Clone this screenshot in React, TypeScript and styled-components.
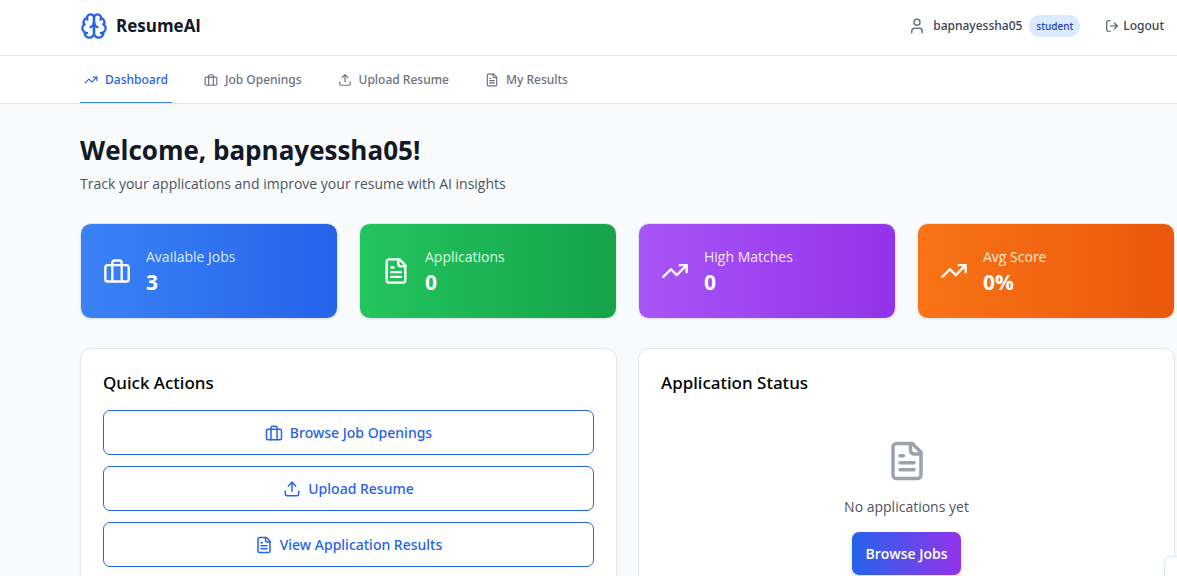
import React from "react";
import styled, { createGlobalStyle } from "styled-components";
import { LogOut, TrendingUp, Upload, User } from "lucide-react";

const mediumFont = `"Noto Sans", "Open Sans", sans-serif`;

const GlobalStyle = createGlobalStyle`
  *, *::before, *::after { box-sizing: border-box; }
  body {
    margin: 0;
    background: #f9fafb;
    color: #000;
    font-family: "Open Sans", "Noto Sans", sans-serif;
    font-size: 14px;
    line-height: 20px;
  }
  h1, h2, p { margin: 0; }
  button { font-family: inherit; cursor: pointer; }
  svg { flex: none; }
`;

const Page = styled.div`
  min-height: 100vh;
`;

const Container = styled.div`
  padding: 0 2px 0 80px;
`;

const Header = styled.header`
  background: #fff;
  border-bottom: 1px solid #e5e7eb;
`;

const HeaderRow = styled(Container)`
  display: flex;
  align-items: center;
  justify-content: space-between;
  height: 55px;
  padding-bottom: 4px;
`;

const Brand = styled.a`
  display: flex;
  align-items: center;
  gap: 8px;
  color: #111827;
  font-size: 17px;
  font-weight: 700;
  line-height: 28px;
  text-decoration: none;
  svg { color: #2563eb; }
`;

const Account = styled.div`
  display: flex;
  align-items: center;
  gap: 14px;
`;

const UserInfo = styled.div`
  display: flex;
  align-items: center;
  gap: 7px;
  color: #374151;
  font-family: ${mediumFont};
  font-size: 12px;
  font-weight: 500;
  svg { color: #6b7280; }
`;

const RoleBadge = styled.span`
  padding: 3px 7px;
  border-radius: 11px;
  background: #dbeafe;
  color: #1e40af;
  font-size: 10px;
  font-weight: 500;
  line-height: 16px;
`;

const LogoutButton = styled.button`
  display: flex;
  align-items: center;
  gap: 4px;
  padding: 5px 11px;
  border: 0;
  border-radius: 8px;
  background: transparent;
  color: #374151;
  font-family: ${mediumFont};
  font-size: 12px;
  font-weight: 500;
  line-height: 18px;
  svg { color: #4b5563; }
`;

const Nav = styled.nav`
  background: #fff;
  border-bottom: 1px solid #e5e7eb;
`;

const TabList = styled(Container)`
  display: flex;
  gap: 28px;
`;

const Tab = styled.a<{ $active?: boolean }>`
  display: flex;
  align-items: center;
  gap: 7px;
  height: 47px;
  padding: 1px 4px 0;
  border-bottom: 1px solid ${(p) => (p.$active ? "#3b82f6" : "transparent")};
  color: ${(p) => (p.$active ? "#2563eb" : "#6b7280")};
  font-family: ${mediumFont};
  font-size: 12px;
  font-weight: 500;
  text-decoration: none;
`;

const Main = styled.main`
  padding: 28px 2px 28px 80px;
`;

const Title = styled.h1`
  color: #111827;
  font-size: 26px;
  font-weight: 700;
  line-height: 36px;
`;

const Subtitle = styled.p`
  margin-top: 5px;
  color: #4b5563;
  font-size: 14px;
  line-height: 22px;
`;

const StatGrid = styled.section`
  display: grid;
  grid-template-columns: repeat(4, 1fr);
  gap: 21px;
  margin-top: 28px;
`;

const StatCard = styled.div<{ $from: string; $to: string }>`
  display: flex;
  align-items: center;
  gap: 15px;
  height: 96px;
  padding: 0 22px;
  border: 1px solid #e5e7eb;
  border-radius: 11px;
  background: linear-gradient(to right, ${(p) => p.$from}, ${(p) => p.$to});
  box-shadow: 0 1px 2px rgba(0, 0, 0, 0.06);
  color: #fff;
`;

const StatLabel = styled.p<{ $color: string }>`
  color: ${(p) => p.$color};
  font-size: 14px;
  line-height: 22px;
`;

const StatValue = styled.p`
  font-size: 21px;
  font-weight: 700;
  line-height: 28px;
`;

const PanelGrid = styled.div`
  display: grid;
  grid-template-columns: repeat(2, 1fr);
  gap: 21px;
  margin-top: 29px;
`;

const Panel = styled.section`
  padding: 22px;
  border: 1px solid #e5e7eb;
  border-radius: 11px;
  background: #fff;
  box-shadow: 0 1px 2px rgba(0, 0, 0, 0.05);
`;

const PanelTitle = styled.h2`
  font-family: ${mediumFont};
  font-size: 17px;
  font-weight: 500;
  line-height: 24px;
`;

const ActionList = styled.div`
  display: grid;
  gap: 11px;
  margin-top: 15px;
`;

const ActionButton = styled.button`
  display: flex;
  align-items: center;
  justify-content: center;
  gap: 7px;
  height: 45px;
  border: 1px solid #2563eb;
  border-radius: 7px;
  background: #fff;
  color: #2563eb;
  font-family: ${mediumFont};
  font-size: 14px;
  font-weight: 500;
`;

const EmptyState = styled.div`
  display: flex;
  flex-direction: column;
  align-items: center;
  padding-top: 45px;
  color: #4b5563;
  font-size: 14px;
  line-height: 22px;
  svg { color: #9ca3af; }
`;

const EmptyText = styled.p`
  margin: 14px 0;
`;

const PrimaryButton = styled.button`
  height: 43px;
  padding: 0 13px;
  border: 0;
  border-radius: 7px;
  background: linear-gradient(to right, #2563eb, #9333ea);
  box-shadow: 0 4px 6px rgba(0, 0, 0, 0.1);
  color: #fff;
  font-size: 14px;
  font-weight: 600;
`;

const HelpWidget = styled.button`
  position: fixed;
  right: -28px;
  bottom: -21px;
  width: 41px;
  height: 41px;
  border: 1px solid #dbeafe;
  border-radius: 7px;
  background: #fff;
  box-shadow: 0 0 2px #dbeafe;
`;

type IconProps = { size: number };

const Glyph = ({ size, children }: IconProps & { children: React.ReactNode }) => (
  <svg
    width={size}
    height={size}
    viewBox="0 0 24 24"
    fill="none"
    stroke="currentColor"
    strokeWidth={2}
    strokeLinecap="round"
    strokeLinejoin="round"
    aria-hidden="true"
  >
    {children}
  </svg>
);

const BrainIcon = ({ size }: IconProps) => (
  <Glyph size={size}>
    <path d="M12 5a3 3 0 1 0-5.997.125 4 4 0 0 0-2.526 5.77 4 4 0 0 0 .556 6.588A4 4 0 1 0 12 18Z" />
    <path d="M12 5a3 3 0 1 1 5.997.125 4 4 0 0 1 2.526 5.77 4 4 0 0 1-.556 6.588A4 4 0 1 1 12 18Z" />
    <path d="M15 13a4.5 4.5 0 0 1-3-4 4.5 4.5 0 0 1-3 4" />
    <path d="M17.599 6.5a3 3 0 0 0 .399-1.375" />
    <path d="M6.003 5.125A3 3 0 0 0 6.401 6.5" />
    <path d="M3.477 10.896a4 4 0 0 1 .585-.396" />
    <path d="M19.938 10.5a4 4 0 0 1 .585.396" />
    <path d="M6 18a4 4 0 0 1-1.967-.516" />
    <path d="M19.967 17.484A4 4 0 0 1 18 18" />
  </Glyph>
);

const BriefcaseIcon = ({ size }: IconProps) => (
  <Glyph size={size}>
    <rect width="20" height="14" x="2" y="7" rx="2" />
    <path d="M16 21V5a2 2 0 0 0-2-2h-4a2 2 0 0 0-2 2v16" />
  </Glyph>
);

const DocumentIcon = ({ size }: IconProps) => (
  <Glyph size={size}>
    <path d="M15 2H6a2 2 0 0 0-2 2v16a2 2 0 0 0 2 2h12a2 2 0 0 0 2-2V7Z" />
    <path d="M14 2v4a2 2 0 0 0 2 2h4" />
    <path d="M10 9H8" />
    <path d="M16 13H8" />
    <path d="M16 17H8" />
  </Glyph>
);

const tabs = [
  { label: "Dashboard", Icon: TrendingUp, active: true },
  { label: "Job Openings", Icon: BriefcaseIcon },
  { label: "Upload Resume", Icon: Upload },
  { label: "My Results", Icon: DocumentIcon },
];

const stats = [
  { label: "Available Jobs", value: "3", Icon: BriefcaseIcon, from: "#3b82f6", to: "#2563eb", tint: "#dbeafe" },
  { label: "Applications", value: "0", Icon: DocumentIcon, from: "#22c55e", to: "#16a34a", tint: "#dcfce7" },
  { label: "High Matches", value: "0", Icon: TrendingUp, from: "#a855f7", to: "#9333ea", tint: "#f3e8ff" },
  { label: "Avg Score", value: "0%", Icon: TrendingUp, from: "#f97316", to: "#ea580c", tint: "#ffedd5" },
];

const actions = [
  { label: "Browse Job Openings", Icon: BriefcaseIcon },
  { label: "Upload Resume", Icon: Upload },
  { label: "View Application Results", Icon: DocumentIcon },
];

export default function App() {
  return (
    <Page>
      <GlobalStyle />
      <Header>
        <HeaderRow>
          <Brand href="#">
            <BrainIcon size={28} />
            ResumeAI
          </Brand>
          <Account>
            <UserInfo>
              <User size={18} />
              <span>bapnayessha05</span>
              <RoleBadge>student</RoleBadge>
            </UserInfo>
            <LogoutButton type="button">
              <LogOut size={14} />
              Logout
            </LogoutButton>
          </Account>
        </HeaderRow>
      </Header>
      <Nav>
        <TabList>
          {tabs.map(({ label, Icon, active }) => (
            <Tab key={label} href="#" $active={active} aria-current={active ? "page" : undefined}>
              <Icon size={14} />
              {label}
            </Tab>
          ))}
        </TabList>
      </Nav>
      <Main>
        <Title>Welcome, bapnayessha05!</Title>
        <Subtitle>Track your applications and improve your resume with AI insights</Subtitle>
        <StatGrid>
          {stats.map(({ label, value, Icon, from, to, tint }) => (
            <StatCard key={label} $from={from} $to={to}>
              <Icon size={28} />
              <div>
                <StatLabel $color={tint}>{label}</StatLabel>
                <StatValue>{value}</StatValue>
              </div>
            </StatCard>
          ))}
        </StatGrid>
        <PanelGrid>
          <Panel>
            <PanelTitle>Quick Actions</PanelTitle>
            <ActionList>
              {actions.map(({ label, Icon }) => (
                <ActionButton key={label} type="button">
                  <Icon size={18} />
                  {label}
                </ActionButton>
              ))}
            </ActionList>
          </Panel>
          <Panel>
            <PanelTitle>Application Status</PanelTitle>
            <EmptyState>
              <DocumentIcon size={42} />
              <EmptyText>No applications yet</EmptyText>
              <PrimaryButton type="button">Browse Jobs</PrimaryButton>
            </EmptyState>
          </Panel>
        </PanelGrid>
      </Main>
      <HelpWidget type="button" aria-label="Help" />
    </Page>
  );
}
